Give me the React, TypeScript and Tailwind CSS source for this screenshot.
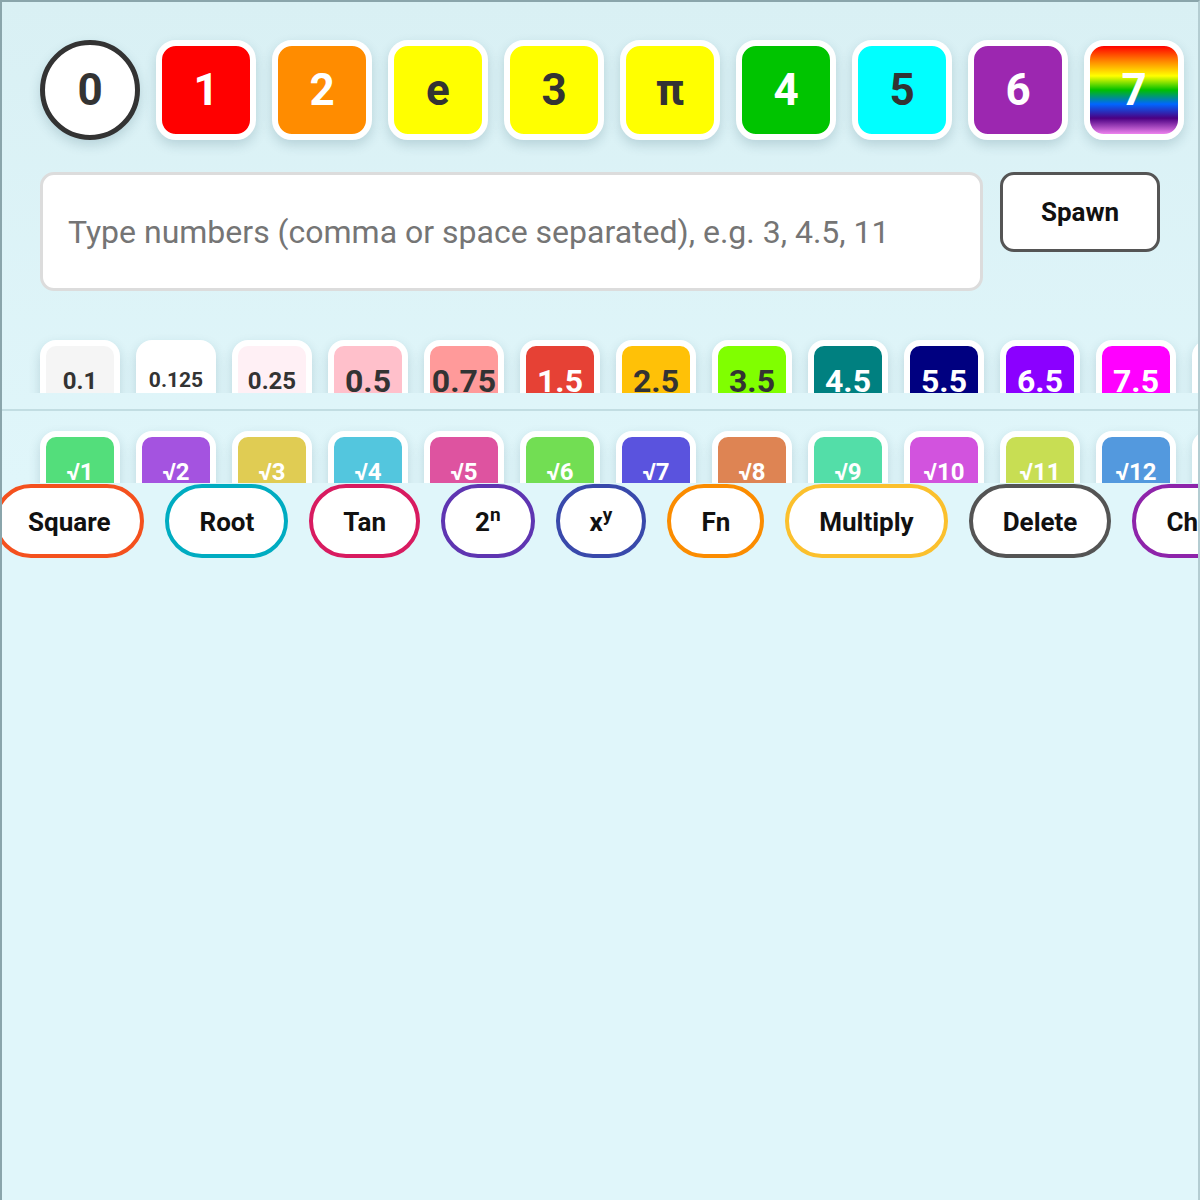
import React from "react";

const bigTiles = [
  { label: "1", cls: "bg-[#ff0000] text-white" },
  { label: "2", cls: "bg-[#ff8c00] text-white" },
  { label: "e", cls: "bg-[#ffff00] text-[#333]" },
  { label: "3", cls: "bg-[#ffff00] text-[#333]" },
  { label: "π", cls: "bg-[#ffff00] text-[#333]" },
  { label: "4", cls: "bg-[#00c400] text-white" },
  { label: "5", cls: "bg-[#00ffff] text-[#333]" },
  { label: "6", cls: "bg-[#9c27b0] text-white" },
  {
    label: "7",
    cls: "bg-[linear-gradient(to_bottom,#ff0000_0%,#ff8c00_18%,#ffff00_34%,#00c000_50%,#0066ff_66%,#4b0082_82%,#ee82ee_100%)] text-white",
  },
];

const decimals = [
  { label: "0.1", cls: "bg-[#f5f5f5] text-[#333] text-[24px]" },
  { label: "0.125", cls: "bg-white text-[#333] text-[21px]" },
  { label: "0.25", cls: "bg-[#fff0f5] text-[#333] text-[24px]" },
  { label: "0.5", cls: "bg-[#ffc0cb] text-[#333] text-[32px]" },
  { label: "0.75", cls: "bg-[#ff9a9a] text-[#333] text-[32px]" },
  { label: "1.5", cls: "bg-[#e64135] text-white text-[32px]" },
  { label: "2.5", cls: "bg-[#ffc107] text-[#333] text-[32px]" },
  { label: "3.5", cls: "bg-[#80ff00] text-[#333] text-[32px]" },
  { label: "4.5", cls: "bg-[#008080] text-white text-[32px]" },
  { label: "5.5", cls: "bg-[#000080] text-white text-[32px]" },
  { label: "6.5", cls: "bg-[#8b00ff] text-white text-[32px]" },
  { label: "7.5", cls: "bg-[#ff00ff] text-white text-[32px]" },
  { label: "8.5", cls: "bg-[#f0a0aa] text-white text-[32px]" },
];

const roots = [
  { label: "√1", cls: "bg-[#53de7b]" },
  { label: "√2", cls: "bg-[#a453e0]" },
  { label: "√3", cls: "bg-[#e0cc53]" },
  { label: "√4", cls: "bg-[#53c6de]" },
  { label: "√5", cls: "bg-[#de53a0]" },
  { label: "√6", cls: "bg-[#72de53]" },
  { label: "√7", cls: "bg-[#5a53de]" },
  { label: "√8", cls: "bg-[#de8453]" },
  { label: "√9", cls: "bg-[#53dea8]" },
  { label: "√10", cls: "bg-[#d253de]" },
  { label: "√11", cls: "bg-[#c8de53]" },
  { label: "√12", cls: "bg-[#5399de]" },
  { label: "√13", cls: "bg-[#de5370]" },
];

const ops: { label: React.ReactNode; cls: string }[] = [
  { label: "Square", cls: "border-[#f4511e]" },
  { label: "Root", cls: "border-[#00acc1]" },
  { label: "Tan", cls: "border-[#d81b60]" },
  {
    label: (
      <>
        2<span className="relative -top-[10px] text-[19px]">n</span>
      </>
    ),
    cls: "border-[#5e35b1]",
  },
  {
    label: (
      <>
        x<span className="relative -top-[10px] text-[19px]">y</span>
      </>
    ),
    cls: "border-[#3949ab]",
  },
  { label: "Fn", cls: "border-[#fb8c00]" },
  { label: "Multiply", cls: "border-[#fbc02d]" },
  { label: "Delete", cls: "border-[#545454]" },
  { label: "Check", cls: "border-[#8e24aa]" },
];

const tileShadow = "shadow-[0_5px_12px_rgba(20,70,90,0.18)]";

export default function App() {
  return (
    <div className="w-full h-[1200px] overflow-hidden bg-[linear-gradient(to_bottom,#d9f0f4,#e0f6fa_40%)] border-l-2 border-t-2 border-r-2 border-l-[#8aa5ab] border-t-[#8aa5ab] border-r-[#b4cdd2] font-['Roboto',sans-serif] pt-[38px]">
      {/* main number tiles */}
      <div className="flex gap-4 pl-[38px]">
        <div
          className={`w-[100px] h-[100px] shrink-0 rounded-full bg-white border-[5px] border-[#333] flex items-center justify-center text-[44px] font-bold text-[#333] ${tileShadow}`}
        >
          0
        </div>
        {bigTiles.map((t) => (
          <div
            key={t.label}
            className={`w-[100px] h-[100px] shrink-0 rounded-[20px] border-[6px] border-white flex items-center justify-center text-[44px] font-bold ${t.cls} ${tileShadow}`}
          >
            {t.label}
          </div>
        ))}
      </div>

      {/* input + spawn */}
      <div className="flex items-start gap-[17px] pl-[38px] mt-8">
        <div className="w-[943px] h-[119px] rounded-[14px] border-[3px] border-[#dcdcdc] bg-white flex items-center px-[25px] text-[32px] text-[#757575]">
          Type numbers (comma or space separated), e.g. 3, 4.5, 11
        </div>
        <button className="w-[160px] h-[80px] rounded-[14px] border-[3px] border-[#555] bg-white text-[26px] font-bold text-[#111] flex items-center justify-center">
          Spawn
        </button>
      </div>

      {/* decimal tiles */}
      <div className="mt-[41px] h-[61px] overflow-hidden pt-2">
        <div className="flex gap-4 pl-[38px]">
          {decimals.map((t) => (
            <div
              key={t.label}
              className={`w-[80px] h-[80px] shrink-0 rounded-[16px] border-[6px] border-white flex items-center justify-center font-bold pt-[2px] ${t.cls} ${tileShadow}`}
            >
              {t.label}
            </div>
          ))}
        </div>
      </div>

      <div className="mt-4 h-[2px] bg-[#c2dde2]" />

      {/* root tiles */}
      <div className="mt-[12px] h-[60px] overflow-hidden pt-2">
        <div className="flex gap-4 pl-[38px]">
          {roots.map((t) => (
            <div
              key={t.label}
              className={`w-[80px] h-[80px] shrink-0 rounded-[16px] border-[6px] border-white flex items-center justify-center text-[24px] font-bold text-white pt-[2px] ${t.cls} ${tileShadow}`}
            >
              {t.label}
            </div>
          ))}
        </div>
      </div>

      {/* operations */}
      <div className="flex gap-[21px] ml-[-8px] mt-px">
        {ops.map((o, i) => (
          <button
            key={i}
            className={`h-[74px] shrink-0 rounded-full border-4 bg-white px-[30px] pt-[3px] text-[26px] font-bold text-[#111] flex items-center ${o.cls}`}
          >
            <span>{o.label}</span>
          </button>
        ))}
      </div>
    </div>
  );
}
